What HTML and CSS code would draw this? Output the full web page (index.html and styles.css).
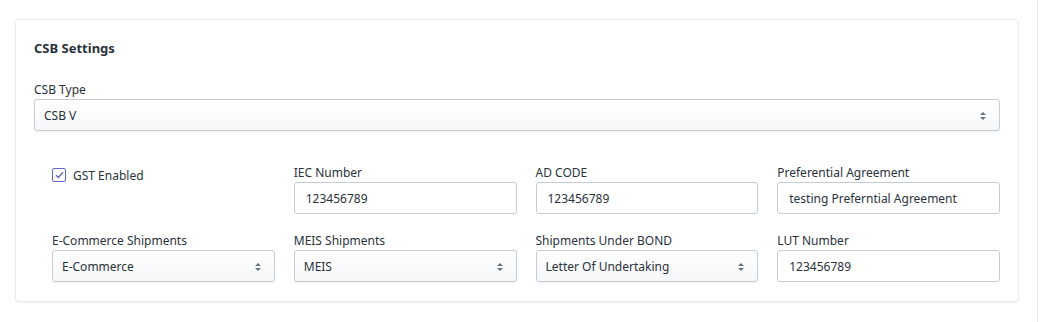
FILE: index.html
```html
<!DOCTYPE html>
<html lang="en">
  <head>
    <meta charset="UTF-8" />
    <meta name="viewport" content="width=device-width, initial-scale=1.0" />
    <title>CSB Settings</title>
    <link rel="stylesheet" href="styles.css">
  </head>
  <body>
    <div id="root">
      <div class="card">
        <h2 class="card-title">CSB Settings</h2>
        <div class="field">
          <label class="field-label">CSB Type</label>
          <div class="select">CSB V</div>
        </div>
        <div class="grid">
          <div class="check">
            <span class="check-box">
              <svg width="9" height="8" viewBox="0 0 9 8"><path d="M1 4.2 L3.4 6.5 L8 1.2" fill="none" stroke="#5c6ac4" stroke-width="1.3" /></svg>
            </span>
            <span class="check-text">GST Enabled</span>
          </div>
          <div class="field">
            <label class="field-label">IEC Number</label>
            <div class="input">123456789</div>
          </div>
          <div class="field">
            <label class="field-label">AD CODE</label>
            <div class="input">123456789</div>
          </div>
          <div class="field">
            <label class="field-label">Preferential Agreement</label>
            <div class="input">testing Preferntial Agreement</div>
          </div>
          <div class="field">
            <label class="field-label">E-Commerce Shipments</label>
            <div class="select">E-Commerce</div>
          </div>
          <div class="field">
            <label class="field-label">MEIS Shipments</label>
            <div class="select">MEIS</div>
          </div>
          <div class="field">
            <label class="field-label">Shipments Under BOND</label>
            <div class="select">Letter Of Undertaking</div>
          </div>
          <div class="field">
            <label class="field-label">LUT Number</label>
            <div class="input">123456789</div>
          </div>
        </div>
      </div>
    </div>
  </body>
</html>
```

FILE: styles.css
```css
* {
  margin: 0;
  padding: 0;
  box-sizing: border-box;
}
body {
  background-color: #fff;
  font-family: "Noto Sans", "Open Sans", sans-serif;
  font-size: 12px;
  color: #2a323b;
}
#root {
  width: 1038px;
  height: 322px;
  padding: 19px 0 0 15px;
  border-right: 1px solid #e8e8e8;
}
.card {
  width: 1004px;
  background-color: #fff;
  border: 1px solid #ebebeb;
  border-radius: 4px;
  box-shadow: 0 1px 2px rgba(0, 0, 0, 0.06);
  padding: 18px 18px 19px 18px;
}
.card-title {
  font-size: 13px;
  font-weight: 700;
  line-height: 20px;
  margin-bottom: 23px;
}
.field-label {
  display: block;
  line-height: 18px;
}
.select,
.input {
  height: 32px;
  border: 1px solid #c4cdd5;
  border-radius: 3px;
  padding: 0 11px;
  line-height: 32px;
  white-space: nowrap;
}
.select {
  position: relative;
  padding-left: 9px;
  background: linear-gradient(#fff, #f6f7f9);
  box-shadow: 0 1px 0 rgba(22, 29, 37, 0.05);
}
.select::after {
  content: "";
  position: absolute;
  right: 13px;
  top: 12px;
  border-left: 3px solid transparent;
  border-right: 3px solid transparent;
  border-bottom: 3px solid #637381;
}
.select::before {
  content: "";
  position: absolute;
  right: 13px;
  top: 17px;
  border-left: 3px solid transparent;
  border-right: 3px solid transparent;
  border-top: 3px solid #637381;
}
.grid {
  display: grid;
  grid-template-columns: repeat(4, 1fr);
  column-gap: 19px;
  row-gap: 18px;
  padding-left: 18px;
  margin-top: 33px;
}
.check {
  display: flex;
  align-items: center;
  gap: 7px;
  height: 18px;
  align-self: start;
  margin-top: 2px;
}
.check-box {
  width: 14px;
  height: 14px;
  border: 1px solid #5c6ac4;
  border-radius: 2px;
  display: flex;
  justify-content: center;
  align-items: center;
}
.check-text {
  line-height: 17px;
}
```
